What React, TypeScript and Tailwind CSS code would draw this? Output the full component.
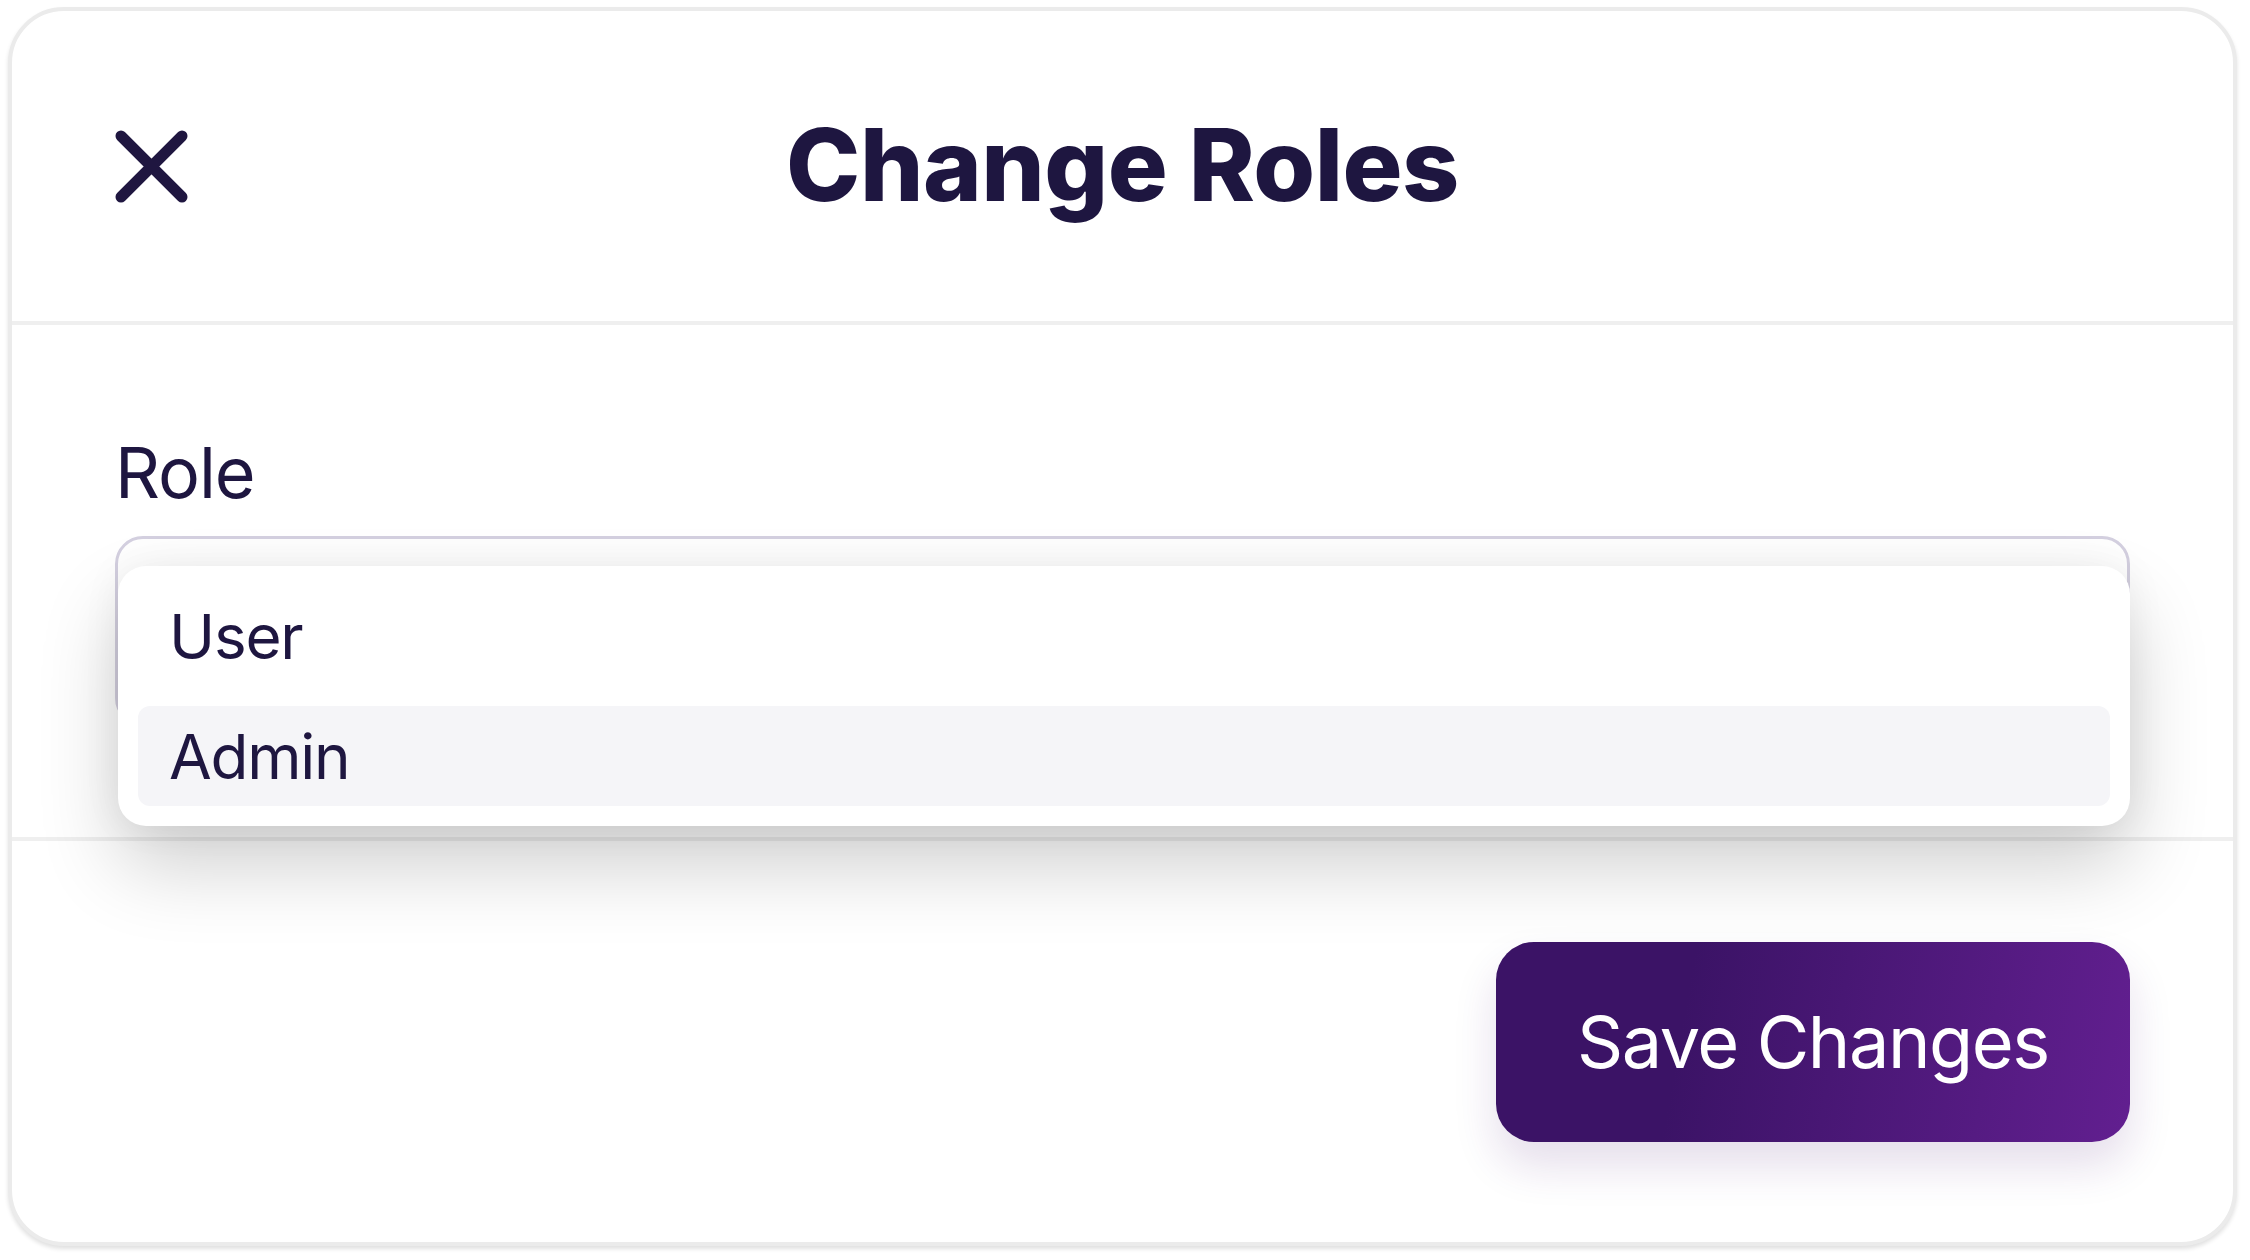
import React from 'react';

// Change Roles dialog with an open role dropdown

function CloseIcon() {
  return (
    <svg width="73" height="73" viewBox="0 0 73 73" fill="none">
      <path d="M6 6L67 67M67 6L6 67" stroke="#1f1640" strokeWidth="11" strokeLinecap="round" />
    </svg>
  );
}

export default function App() {
  const roles = ['User', 'Admin'];
  const highlighted = 'Admin';

  return (
    <div className="w-[2250px] h-[1260px] bg-white pt-[7px] pl-[8px] font-['Inter','Noto_Sans',sans-serif] text-[#1e1640]">
      <div className="w-[2229px] h-[1239px] rounded-[56px] border-4 border-[#ebebeb] bg-white shadow-[0_3px_4px_rgba(0,0,0,0.12)] flex flex-col overflow-hidden">
        {/* Header */}
        <div className="h-[314px] shrink-0 border-b-4 border-[#efefef] px-[103px] grid grid-cols-[1fr_auto_1fr] items-center">
          <button className="justify-self-start">
            <CloseIcon />
          </button>
          <h1 className="text-[100px] leading-none font-extrabold tracking-[-0.005em] pb-[2px]">Change Roles</h1>
          <div />
        </div>

        {/* Body */}
        <div className="h-[516px] shrink-0 border-b-4 border-[#efefef] px-[103px] pt-[108px] relative z-10">
          <label className="block text-[70px] leading-[80px] tracking-[-0.015em] mb-[23px]">Role</label>
          <div className="relative h-[190px] rounded-[28px] border-[3px] border-[#d4d0e0] bg-white">
            <div className="absolute left-0 -right-[3px] top-[27px] rounded-[28px] bg-white p-[20px] flex flex-col gap-[20px] shadow-[0_40px_80px_rgba(0,0,0,0.19),0_0_40px_rgba(0,0,0,0.06)]">
              {roles.map((role) => (
                <div
                  key={role}
                  className={`h-[100px] rounded-[12px] px-[31px] flex items-center text-[62px] tracking-[-0.02em] ${
                    role === highlighted ? 'bg-[#f5f5f8]' : ''
                  }`}
                >
                  {role}
                </div>
              ))}
            </div>
          </div>
        </div>

        {/* Footer */}
        <div className="flex-1 px-[103px] flex items-center justify-end">
          <button className="w-[634px] h-[200px] rounded-[38px] bg-[linear-gradient(100deg,#3b1366_30%,#621f90_100%)] text-white text-[72px] tracking-[-0.02em] shadow-[0_24px_44px_rgba(70,20,110,0.14)]">
            Save Changes
          </button>
        </div>
      </div>
    </div>
  );
}
